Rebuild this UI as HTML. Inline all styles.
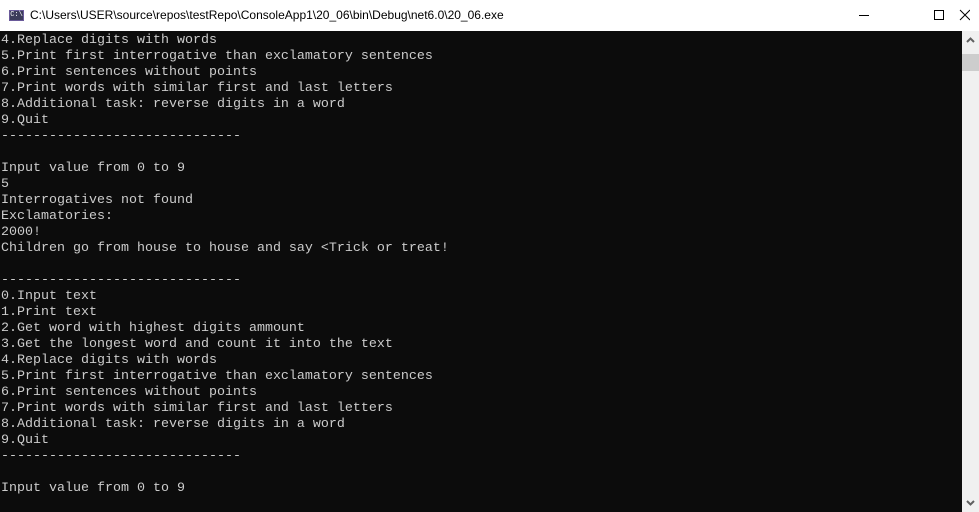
<!DOCTYPE html>
<html><head><meta charset="utf-8"><style>
html,body{margin:0;padding:0;width:979px;height:512px;overflow:hidden;background:#0c0c0c}
#title{position:absolute;left:0;top:0;width:979px;height:31px;background:#fff;font-family:"Liberation Sans",sans-serif;font-size:12px;color:#000}
#title .t{position:absolute;left:30px;top:8px}
#icon{position:absolute;left:9px;top:10px;width:15px;height:11px;background:#3c3c5a;border:1px solid #6a5a9a;box-sizing:border-box;color:#fff;font-size:7px;line-height:9px;text-align:center;font-family:"Liberation Mono",monospace}
#con{position:absolute;left:1px;top:33px;width:960px;height:479px;font-family:"Liberation Mono",monospace;font-size:13.33px;line-height:16px;color:#cccccc;white-space:pre}
#sb{position:absolute;left:962px;top:31px;width:17px;height:481px;background:#f0f0f0}
#thumb{position:absolute;left:962px;top:54px;width:17px;height:17px;background:#cdcdcd}
</style></head><body>
<div id="title"><div id="icon">C:\</div><span class="t">C:\Users\USER\source\repos\testRepo\ConsoleApp1\20_06\bin\Debug\net6.0\20_06.exe</span>
<svg style="position:absolute;left:850px;top:8px" width="120" height="16">
<line x1="9" y1="7.5" x2="19" y2="7.5" stroke="#000" stroke-width="1"/>
<rect x="84.5" y="2.5" width="9" height="9" fill="none" stroke="#000"/>
<path d="M110 2 L120 12 M120 2 L110 12" stroke="#000" stroke-width="1"/>
</svg></div>
<div id="con">4.Replace digits with words
5.Print first interrogative than exclamatory sentences
6.Print sentences without points
7.Print words with similar first and last letters
8.Additional task: reverse digits in a word
9.Quit
------------------------------

Input value from 0 to 9
5
Interrogatives not found
Exclamatories:
2000!
Children go from house to house and say &lt;Trick or treat!

------------------------------
0.Input text
1.Print text
2.Get word with highest digits ammount
3.Get the longest word and count it into the text
4.Replace digits with words
5.Print first interrogative than exclamatory sentences
6.Print sentences without points
7.Print words with similar first and last letters
8.Additional task: reverse digits in a word
9.Quit
------------------------------

Input value from 0 to 9</div>
<div id="sb"></div><div id="thumb"></div>
<svg style="position:absolute;left:962px;top:31px" width="17" height="481">
<path d="M5 11 L8.5 7.5 L12 11" stroke="#606060" stroke-width="2" fill="none"/>
<path d="M5 470 L8.5 473.5 L12 470" stroke="#606060" stroke-width="2" fill="none"/>
</svg>
</body></html>
